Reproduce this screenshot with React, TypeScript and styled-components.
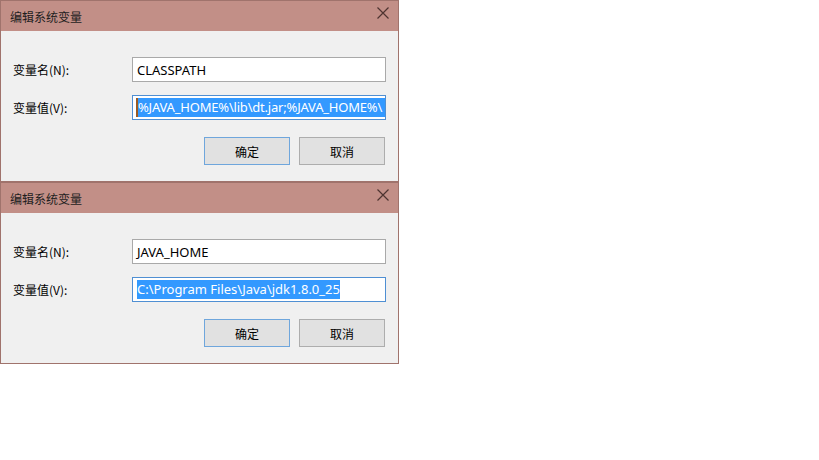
import styled, { createGlobalStyle } from 'styled-components';

const GlobalStyle = createGlobalStyle`
  body {
    margin: 0;
    background: #ffffff;
    font-family: 'Noto Sans', 'Noto Sans CJK SC', sans-serif;
  }
`;

const Stack = styled.div`
  display: flex;
  flex-direction: column;
  width: 399px;
`;

const Dialog = styled.div`
  border: 1px solid #a0736c;
  background: #f0f0f0;
`;

const TitleBar = styled.div`
  height: 30px;
  display: flex;
  align-items: center;
  justify-content: space-between;
  background: #c28f87;
  padding: 0 9px 0 9px;
`;

const Title = styled.span`
  font-family: 'Noto Sans CJK SC', sans-serif;
  font-size: 12px;
  color: #1e1e1e;
`;

const Close = styled.svg`
  width: 12px;
  height: 12px;
  margin-top: -7px;
`;

const Body = styled.div`
  padding: 26px 13px 16px 12px;
`;

const Form = styled.div`
  display: grid;
  grid-template-columns: 119px 254px;
  row-gap: 13px;
  align-items: center;
`;

const Label = styled.label`
  font-family: 'Noto Sans CJK SC', sans-serif;
  font-size: 12px;
  color: #000;
`;

const Field = styled.div<{ $focused?: boolean }>`
  height: 25px;
  box-sizing: border-box;
  background: #fff;
  border: 1px solid ${(p) => (p.$focused ? '#4f8fd3' : '#a9a9a9')};
  padding: 0 ${(p) => (p.$focused ? '0' : '4px')} 0 4px;
  display: flex;
  align-items: center;
  overflow: hidden;
  white-space: nowrap;
  font-family: 'Noto Sans', sans-serif;
  font-size: 13px;
  color: #000;
`;

const Selected = styled.span<{ $caret?: boolean }>`
  background: #3399ff;
  color: #fff;
  line-height: 19px;
  border-left: ${(p) => (p.$caret ? '2px solid #9a5a24' : 'none')};
  flex: ${(p) => (p.$caret ? '1' : '0 0 auto')};
  letter-spacing: ${(p) => (p.$caret ? '-0.2px' : '0')};
  margin-left: ${(p) => (p.$caret ? '-1px' : '0')};
`;

const Buttons = styled.div`
  display: flex;
  justify-content: flex-end;
  gap: 9px;
  margin-top: 17px;
`;

const Button = styled.button<{ $default?: boolean }>`
  width: 86px;
  height: 28px;
  box-sizing: border-box;
  background: #e1e1e1;
  border: 1px solid ${(p) => (p.$default ? '#6fa6dc' : '#adadad')};
  font-family: 'Noto Sans CJK SC', sans-serif;
  font-size: 12px;
  color: #000;
  padding: 0;
`;

type Props = {
  name: string;
  value: string;
  caret?: boolean;
};

function EditDialog({ name, value, caret }: Props) {
  return (
    <Dialog>
      <TitleBar>
        <Title>编辑系统变量</Title>
        <Close viewBox="0 0 12 12">
          <path d="M0.5 0.5 L11.5 11.5 M11.5 0.5 L0.5 11.5" stroke="#4e3431" strokeWidth="1.2" />
        </Close>
      </TitleBar>
      <Body>
        <Form>
          <Label>变量名(N):</Label>
          <Field>{name}</Field>
          <Label>变量值(V):</Label>
          <Field $focused>
            <Selected $caret={caret}>{value}</Selected>
          </Field>
        </Form>
        <Buttons>
          <Button $default>确定</Button>
          <Button>取消</Button>
        </Buttons>
      </Body>
    </Dialog>
  );
}

export default function App() {
  return (
    <>
      <GlobalStyle />
      <Stack>
        <EditDialog name="CLASSPATH" value="%JAVA_HOME%\lib\dt.jar;%JAVA_HOME%\" caret />
        <EditDialog name="JAVA_HOME" value="C:\Program Files\Java\jdk1.8.0_25" />
      </Stack>
    </>
  );
}
